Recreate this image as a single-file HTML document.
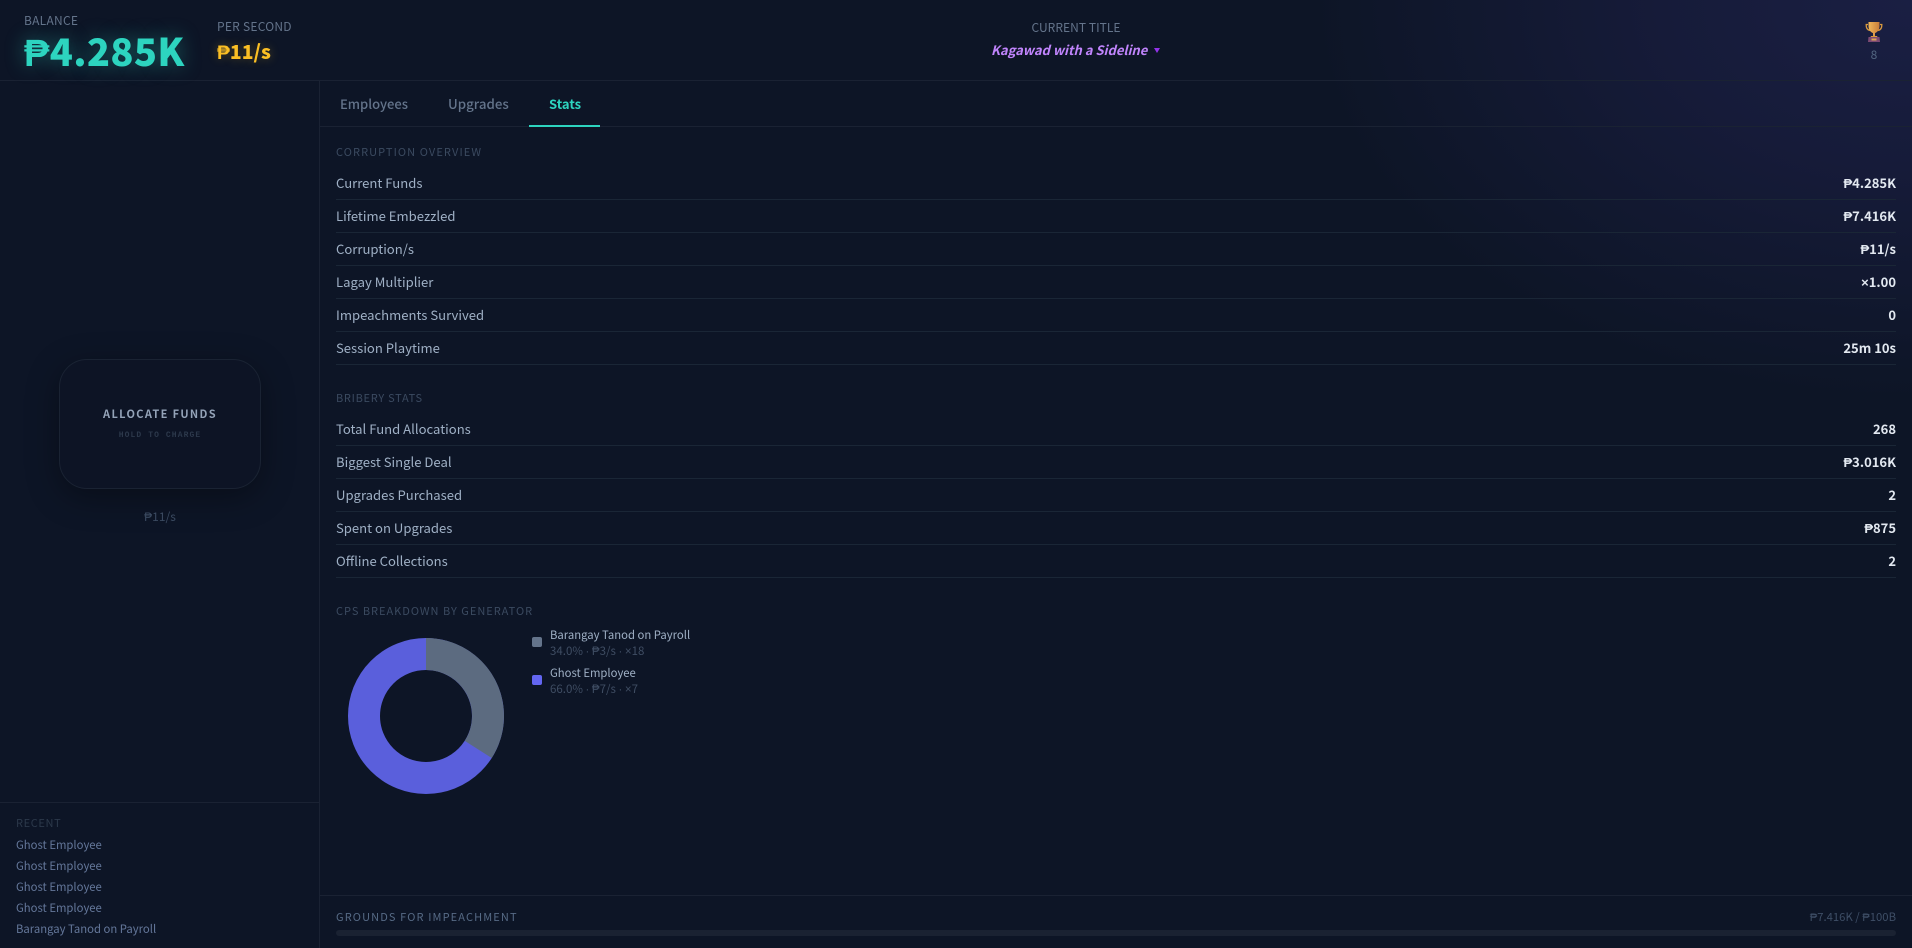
<!DOCTYPE html>
<html lang="en">
<head>
<meta charset="utf-8">
<title>Stats</title>
<style>
html,body{margin:0;padding:0;width:1912px;height:948px;overflow:hidden;background:#0d1526;}
body{position:relative;font-family:"Noto Sans CJK JP","Liberation Sans",sans-serif;}
.bg{position:absolute;inset:0;background:radial-gradient(ellipse 600px 400px at 1912px 0px,#1a1f43 0%,#161b39 42%,rgba(13,21,38,0) 100%);}
.t{position:absolute;white-space:nowrap;line-height:20px;height:20px;}
.l{position:absolute;left:336px;font-size:13.100px;color:#9fb0c5;white-space:nowrap;line-height:20px;}
.v{position:absolute;right:16px;font-size:13px;font-weight:700;color:#e2e8f0;white-space:nowrap;line-height:20px;}
.b{position:absolute;left:336px;width:1560px;height:1px;background:#1a2636;}
.h{position:absolute;left:336px;font-size:11px;color:#3b4a60;white-space:nowrap;line-height:20px;}
.r{position:absolute;left:16px;font-size:11.300px;color:#64779a;white-space:nowrap;line-height:20px;}
.line{position:absolute;background:#1a2233;}
.x{font-family:"Liberation Sans",sans-serif;}
</style>
</head>
<body>
<div class="bg"></div>

<div class="line" style="left:0;top:80px;width:1912px;height:1px"></div>
<div class="line" style="left:319px;top:81px;width:1px;height:867px"></div>
<div class="line" style="left:320px;top:126px;width:1592px;height:1px"></div>
<div class="line" style="left:0;top:802px;width:319px;height:1px"></div>
<div class="line" style="left:320px;top:895px;width:1592px;height:1px"></div>

<div class="t" style="left:24px;top:11px;font-size:12px;color:#64748b;letter-spacing:.25px">BALANCE</div>
<div class="t" style="left:24px;top:40px;font-size:38px;font-weight:900;letter-spacing:.35px;color:#2dd4bf;text-shadow:0 0 20px rgba(45,212,191,.4)">₱4.285K</div>
<div class="t" style="left:217px;top:17px;font-size:12px;color:#64748b;letter-spacing:.25px">PER SECOND</div>
<div class="t" style="left:217px;top:41px;font-size:19.400px;font-weight:900;color:#fbbf24;text-shadow:0 0 10px rgba(251,191,36,.3)">₱11/s</div>

<div class="t" style="left:976px;width:200px;text-align:center;top:18px;font-size:12px;color:#64748b;letter-spacing:.05px">CURRENT TITLE</div>
<div class="t" style="left:991px;top:40px;font-size:13px;font-weight:700;font-style:italic;color:#c084fc">Kagawad with a Sideline</div>
<svg style="position:absolute;left:1154px;top:48px" width="6" height="5"><path d="M0 0H6L3 5Z" fill="#9333ea"/></svg>

<svg style="position:absolute;left:1865px;top:21px" width="18" height="22" viewBox="0 0 18 22">
<defs><linearGradient id="g" x1="0" y1="0" x2="1" y2="0"><stop offset="0" stop-color="#f0b75a"/><stop offset="1" stop-color="#c97d3a"/></linearGradient></defs>
<path d="M3 3.500H1.200C1 7 2.500 9 5 9.500M15 3.500H16.800C17 7 15.500 9 13 9.500" fill="none" stroke="#d99a3f" stroke-width="1.300"/>
<path d="M3.500 1H14.500V5C14.500 9 12 11.500 10 12V15H8V12C6 11.500 3.500 9 3.500 5Z" fill="url(#g)"/>
<path d="M6 15H12L12.500 16H5.500Z" fill="#d99a3f"/>
<path d="M3.500 16H14.500L15 21H3Z" fill="#7d4a73"/>
<rect x="6.500" y="17.500" width="5" height="2" fill="#d9a35a"/>
</svg>
<div class="t" style="left:1864px;width:20px;text-align:center;top:45px;font-size:12px;color:#526680">8</div>

<div class="t" style="left:340px;top:94px;font-size:13px;font-weight:500;color:#64748b">Employees</div>
<div class="t" style="left:448px;top:94px;font-size:13.300px;font-weight:500;color:#64748b">Upgrades</div>
<div class="t" style="left:549px;top:94px;font-size:13px;font-weight:700;color:#2dd4bf">Stats</div>
<div style="position:absolute;left:529px;top:125px;width:71px;height:2px;background:#2dd4bf"></div>

<div class="h" style="top:142px;letter-spacing:1.090px">CORRUPTION OVERVIEW</div>
<div class="l" style="top:173px">Current Funds</div><div class="v" style="top:173px">₱4.285K</div><div class="b" style="top:199px"></div>
<div class="l" style="top:206px">Lifetime Embezzled</div><div class="v" style="top:206px">₱7.416K</div><div class="b" style="top:232px"></div>
<div class="l" style="top:239px">Corruption/s</div><div class="v" style="top:239px">₱11/s</div><div class="b" style="top:265px"></div>
<div class="l" style="top:272px">Lagay Multiplier</div><div class="v" style="top:272px"><span class="x">×</span>1.00</div><div class="b" style="top:298px"></div>
<div class="l" style="top:305px">Impeachments Survived</div><div class="v" style="top:305px">0</div><div class="b" style="top:331px"></div>
<div class="l" style="top:338px">Session Playtime</div><div class="v" style="top:338px">25m 10s</div><div class="b" style="top:364px"></div>

<div class="h" style="top:388px;letter-spacing:.71px">BRIBERY STATS</div>
<div class="l" style="top:419px">Total Fund Allocations</div><div class="v" style="top:419px">268</div><div class="b" style="top:445px"></div>
<div class="l" style="top:452px">Biggest Single Deal</div><div class="v" style="top:452px">₱3.016K</div><div class="b" style="top:478px"></div>
<div class="l" style="top:485px">Upgrades Purchased</div><div class="v" style="top:485px">2</div><div class="b" style="top:511px"></div>
<div class="l" style="top:518px">Spent on Upgrades</div><div class="v" style="top:518px">₱875</div><div class="b" style="top:544px"></div>
<div class="l" style="top:551px">Offline Collections</div><div class="v" style="top:551px">2</div><div class="b" style="top:577px"></div>

<div class="h" style="top:601px;letter-spacing:.99px">CPS BREAKDOWN BY GENERATOR</div>
<svg style="position:absolute;left:340px;top:630px" width="172" height="172" viewBox="-86 -86 172 172">
<circle r="62" fill="none" stroke="#5a5fdc" stroke-width="32"/>
<path d="M0 -78A78 78 0 0 1 65.700 42L38.800 24.900A46 46 0 0 0 0 -46Z" fill="#5c6b80"/>
</svg>
<div style="position:absolute;left:532px;top:637px;width:10px;height:10px;border-radius:2px;background:#64748b"></div>
<div class="t" style="left:550px;top:625px;font-size:11.300px;color:#9fb0c5">Barangay Tanod on Payroll</div>
<div class="t" style="left:550px;top:641px;font-size:11.500px;color:#3f4d63">34.0% <span class="x">·</span> ₱3/s <span class="x">·</span> <span class="x">×</span>18</div>
<div style="position:absolute;left:532px;top:675px;width:10px;height:10px;border-radius:2px;background:#6366f1"></div>
<div class="t" style="left:550px;top:663px;font-size:11.300px;color:#9fb0c5">Ghost Employee</div>
<div class="t" style="left:550px;top:679px;font-size:11.500px;color:#3f4d63">66.0% <span class="x">·</span> ₱7/s <span class="x">·</span> <span class="x">×</span>7</div>

<div style="position:absolute;left:59px;top:359px;width:200px;height:128px;border:1px solid #1a2333;border-radius:28px;background:#0d1425;box-shadow:0 8px 32px rgba(0,0,0,.35)"></div>
<div class="t" style="left:60px;width:200px;text-align:center;top:404px;font-size:11px;font-weight:700;color:#94a3b8;letter-spacing:1.350px">ALLOCATE FUNDS</div>
<div class="t" style="left:60px;width:200px;text-align:center;top:426px;font-family:'Liberation Mono',monospace;font-size:8px;font-weight:700;color:#2c384b;letter-spacing:1.100px">HOLD TO CHARGE</div>
<div class="t" style="left:60px;width:200px;text-align:center;top:507px;font-size:12px;color:#3b4a60">₱11/s</div>

<div class="r" style="top:813px;font-size:11px;color:#2c394b;letter-spacing:.65px">RECENT</div>
<div class="r" style="top:835px">Ghost Employee</div>
<div class="r" style="top:856px">Ghost Employee</div>
<div class="r" style="top:877px">Ghost Employee</div>
<div class="r" style="top:898px">Ghost Employee</div>
<div class="r" style="top:919px">Barangay Tanod on Payroll</div>

<div class="t" style="left:336px;top:907px;font-size:11px;color:#566a85;letter-spacing:1.120px">GROUNDS FOR IMPEACHMENT</div>
<div class="t" style="right:16px;top:907px;font-size:11.300px;color:#3e4e66">₱7.416K / ₱100B</div>
<div style="position:absolute;left:336px;top:930px;width:1560px;height:6px;border-radius:3px;background:#1a2232"></div>
</body>
</html>
